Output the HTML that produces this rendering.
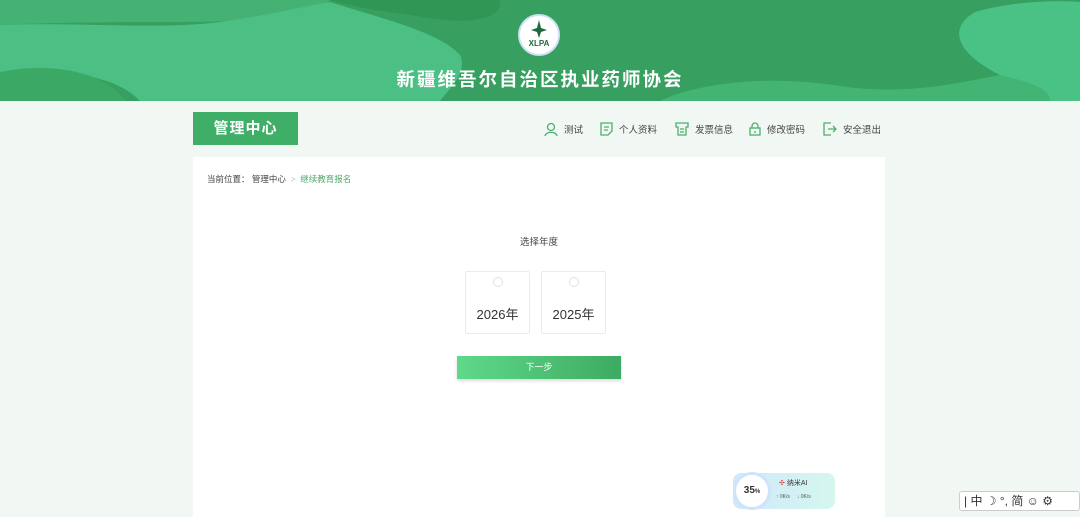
<!DOCTYPE html>
<html><head><meta charset="utf-8"><style>
*{margin:0;padding:0;box-sizing:border-box}
body{width:1080px;height:512px;overflow:hidden;background:#f1f7f3;font-family:"Liberation Sans","Noto Sans CJK SC",sans-serif;position:relative}
.hdr{position:absolute;left:0;top:0;width:1080px;height:101px;background:#379f5f;overflow:hidden}
.t{position:absolute;left:0;width:1080px;top:66px;text-align:center;color:#fff;font-size:18.5px;font-weight:bold;letter-spacing:2px}
.logo{position:absolute;left:518px;top:14px;width:42px;height:42px;border-radius:50%;background:#fff;border:2px solid #cfe0f5}
.logo b{position:absolute;left:0;width:38px;top:23px;text-align:center;font-size:8px;color:#1d6b3d}
.tab{position:absolute;left:193px;top:112px;width:105px;height:33px;background:#3fae67;color:#fff;font-size:15px;font-weight:bold;text-align:center;line-height:33px;letter-spacing:1px}
.nav{position:absolute;top:122px;font-size:9.5px;color:#444;display:flex;align-items:center}
.nav svg{margin-right:6px}
.card{position:absolute;left:193px;top:157px;width:692px;height:360px;background:#fff}
.bc{position:absolute;left:14px;top:16px;font-size:8.5px;color:#444}
.bc span{color:#52a76a}
.yr{position:absolute;top:114px;width:65px;height:63px;border:1px solid #e8ecf2;border-radius:2px;text-align:center}
.yr i{display:block;margin:5px auto 0;width:10px;height:10px;border:1px solid #dde2ea;border-radius:50%}
.yr div{margin-top:17px;font-size:13px;color:#333}
.btn{position:absolute;left:264px;top:199px;width:164px;height:23px;background:linear-gradient(90deg,#5fd98a,#3dab62);color:#fff;font-size:9px;text-align:center;line-height:23px;box-shadow:0 2px 3px rgba(0,0,0,.15)}
</style></head><body>
<div class="hdr">
<svg width="1080" height="101" style="position:absolute;left:0;top:0">
<path d="M0 0H330C320 12 290 18 250 20C190 24 110 20 0 25Z" fill="#45b172"/>
<path d="M0 25C80 22 160 30 220 22C270 15 310 5 330 2C380 18 440 32 460 55C468 72 450 88 440 101H140C120 80 80 68 0 72Z" fill="#4bbf84"/>
<path d="M0 72C50 62 90 72 110 86C118 92 122 97 126 101H0Z" fill="#3ba866"/>
<path d="M330 0H500C505 18 470 25 430 18C390 12 355 8 330 0Z" fill="#2f9656"/>
<path d="M660 101C700 82 770 75 840 86C900 95 950 85 1000 75L1080 70V101Z" fill="#43b473"/>
<path d="M1000 75C960 55 945 30 975 12C1010 2 1050 0 1080 2V101H1050C1050 88 1030 82 1000 75Z" fill="#4ac285"/>
</svg>
<div class="logo"><svg width="38" height="38" style="position:absolute;left:0;top:0"><path d="M19 4L21 12L27 14L21 16L19 22L17 16L11 14L17 12Z" fill="#1d6b3d"/></svg><b>XLPA</b></div>
<div class="t">新疆维吾尔自治区执业药师协会</div>
</div>
<div class="tab">管理中心</div>
<div class="nav" style="left:544px"><svg width="14" height="14" fill="none" stroke="#4caf6e" stroke-width="1.3"><circle cx="7" cy="5" r="3.5"/><path d="M1 14C2 9 12 9 13 14"/></svg>测试</div>
<div class="nav" style="left:600px"><svg width="13" height="14" fill="none" stroke="#4caf6e" stroke-width="1.3"><path d="M1 1H12V9L8 13H1Z M4 5H9M4 8H8"/></svg>个人资料</div>
<div class="nav" style="left:675px"><svg width="14" height="14" fill="none" stroke="#4caf6e" stroke-width="1.3"><path d="M1 1H13V5H11V13H3V5H1Z M5 7H9M5 10H9"/></svg>发票信息</div>
<div class="nav" style="left:749px"><svg width="12" height="14" fill="none" stroke="#4caf6e" stroke-width="1.3"><rect x="1" y="6" width="10" height="7"/><path d="M3 6V4A3 3 0 0 1 9 4V6M6 9V11"/></svg>修改密码</div>
<div class="nav" style="left:823px"><svg width="14" height="14" fill="none" stroke="#4caf6e" stroke-width="1.3"><path d="M8 1H1V13H8M5 7H13M10 4L13 7L10 10"/></svg>安全退出</div>
<div class="card">
<div class="bc">当前位置：&nbsp;管理中心 &nbsp;<span style="color:#bbb">&gt;</span>&nbsp; <span>继续教育报名</span></div>
<div style="position:absolute;left:0;width:692px;top:77px;text-align:center;font-size:9.5px;color:#444">选择年度</div>
<div class="yr" style="left:272px"><i></i><div>2026年</div></div>
<div class="yr" style="left:348px"><i></i><div>2025年</div></div>
<div class="btn">下一步</div>
</div>
<div style="position:absolute;left:733px;top:473px;width:102px;height:36px;border-radius:8px;background:linear-gradient(90deg,#cfe8fb,#d5f7ee)"></div>
<div style="position:absolute;left:733px;top:472px;width:38px;height:38px;border-radius:50%;background:#fff;border:3px solid #cfe3fb;font-size:10px;font-weight:bold;text-align:center;line-height:32px;color:#333">35<small style="font-size:6px">%</small></div>
<div style="position:absolute;left:779px;top:478px;font-size:7px;color:#333"><span style="color:#e33">✣</span> 纳米AI</div>
<div style="position:absolute;left:776px;top:494px;font-size:5px;color:#555">↑ 0K/s &nbsp;&nbsp;&nbsp; ↓ 0K/s</div>
<div style="position:absolute;left:959px;top:491px;width:121px;height:20px;background:#fff;border:1px solid #ccc;border-radius:3px;font-size:12px;color:#333;line-height:18px;padding-left:4px;white-space:nowrap">| 中 ☽ °, 简 ☺ ⚙</div>
</body></html>
